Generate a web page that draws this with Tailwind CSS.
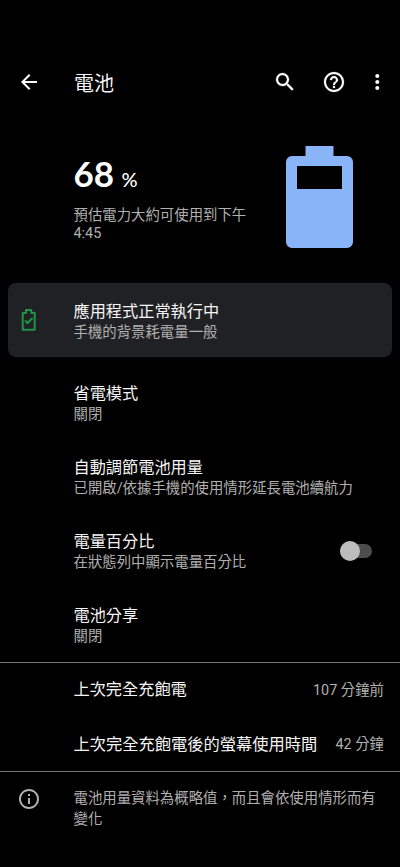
<!DOCTYPE html>
<html lang="zh-Hant">
<head>
<meta charset="utf-8">
<title>電池</title>
<script src="https://cdn.jsdelivr.net/npm/@tailwindcss/browser@4"></script>
</head>
<body class="bg-black text-[#f5f5f5] font-['Roboto','Noto_Sans_CJK_TC',sans-serif]">
<div class="w-[400px] h-[867px] overflow-hidden flex flex-col bg-black">
  <header class="mt-[58px] h-12 flex items-center shrink-0">
    <svg class="ml-[17px] size-6" viewBox="0 0 24 24" fill="#fff"><path d="M20 11H7.83l5.59-5.59L12 4l-8 8 8 8 1.41-1.41L7.83 13H20v-2z"/></svg>
    <h1 class="ml-[33px] pt-[3px] text-[20px] leading-6 grow">電池</h1>
    <svg class="size-6 mr-[25px]" viewBox="0 0 24 24" fill="#fff" stroke="#fff" stroke-width=".3"><path d="M15.5 14h-.79l-.28-.27A6.47 6.47 0 0 0 16 9.5 6.5 6.5 0 1 0 9.5 16c1.61 0 3.09-.59 4.23-1.57l.27.28v.79l5 4.99L20.49 19l-4.99-5zm-6 0C7.01 14 5 11.99 5 9.5S7.01 5 9.5 5 14 7.01 14 9.5 11.99 14 9.5 14z"/></svg>
    <svg class="size-6 mr-[19px]" viewBox="0 0 24 24" fill="#fff" stroke="#fff" stroke-width=".2"><path d="M11 18h2v-2h-2v2zm1-16C6.48 2 2 6.48 2 12s4.48 10 10 10 10-4.48 10-10S17.52 2 12 2zm0 18c-4.41 0-8-3.59-8-8s3.59-8 8-8 8 3.59 8 8-3.59 8-8 8zm0-14c-2.21 0-4 1.79-4 4h2c0-1.1.9-2 2-2s2 .9 2 2c0 2-3 1.750-3 5h2c0-2.250 3-2.500 3-5 0-2.210-1.790-4-4-4z"/></svg>
    <svg class="size-6 mr-[11px]" viewBox="0 0 24 24" fill="#fff"><path d="M12.300 8c1.1 0 2-.9 2-2s-.9-2-2-2-2 .9-2 2 .9 2 2 2zm0 2c-1.1 0-2 .9-2 2s.9 2 2 2 2-.9 2-2-.9-2-2-2zm0 6c-1.1 0-2 .9-2 2s.9 2 2 2 2-.9 2-2-.9-2-2-2z"/></svg>
  </header>
  <section class="h-[177px] shrink-0 flex pl-[73.500px]">
    <div class="w-[212px] pt-[47px]">
      <div class="flex items-baseline font-['Lato'] leading-10 text-white"><span class="w-12 text-[35px] font-bold">68</span><span class="text-[20px] font-medium">%</span></div>
      <p class="mt-[8px] w-[180px] text-[14.4px] leading-[18px] text-[#b0b0b0]">預估電力大約可使用到下午 4:45</p>
    </div>
    <svg class="mt-10 w-[67px] h-[102px]" viewBox="0 0 67 102"><path fill="#8ab4f8" fill-rule="evenodd" d="M19.5 0h28v10H61a6 6 0 0 1 6 6v80a6 6 0 0 1-6 6H6a6 6 0 0 1-6-6V16a6 6 0 0 1 6-6h13.500zM11 20v23h45V20z"/></svg>
  </section>
  <section class="mx-2 h-[74px] shrink-0 rounded-lg bg-[#202124] flex items-center">
    <svg class="ml-2 size-6" viewBox="0 0 24 24" fill="none" stroke="#1e9446" stroke-width="2"><path stroke-linejoin="round" d="M6.700 5H10V2h5.300v3h3.400v16.700h-12z"/><path d="M9 12.500l2.500 2.500 5-5"/></svg>
    <div class="ml-[33.500px] pt-[3px]"><h2 class="text-[16.2px] leading-[21px]">應用程式正常執行中</h2><p class="text-[14.4px] leading-[21px] text-[#b0b0b0]">手機的背景耗電量一般</p></div>
  </section>
  <main class="mt-[9px] shrink-0">
    <div class="h-[74px] pt-[2px] pl-[73.500px] flex flex-col justify-center"><h2 class="text-[16.2px] leading-[21px]">省電模式</h2><p class="text-[14.4px] leading-[21px] text-[#b0b0b0]">關閉</p></div>
    <div class="h-[74px] pt-[2px] pl-[73.500px] flex flex-col justify-center"><h2 class="text-[16.2px] leading-[21px]">自動調節電池用量</h2><p class="text-[14.4px] leading-[21px] text-[#b0b0b0]">已開啟/依據手機的使用情形延長電池續航力</p></div>
    <div class="h-[74px] pl-[73.500px] pr-7 flex items-center justify-between"><div class="pt-[2px]"><h2 class="text-[16.2px] leading-[21px]">電量百分比</h2><p class="text-[14.4px] leading-[21px] text-[#b0b0b0]">在狀態列中顯示電量百分比</p></div>
      <div class="w-8 h-5 flex items-center"><div class="w-8 h-[14px] rounded-full bg-[#4d4d4d] flex items-center"><div class="size-5 shrink-0 rounded-full bg-[#bdbdbd]"></div></div></div></div>
    <div class="h-[74px] pt-[2px] pl-[73.500px] flex flex-col justify-center"><h2 class="text-[16.2px] leading-[21px]">電池分享</h2><p class="text-[14.4px] leading-[21px] text-[#b0b0b0]">關閉</p></div>
  </main>
  <section class="border-y border-[#777] h-[110px] shrink-0 pl-[73.500px] pr-4">
    <div class="h-[54px] pt-px flex justify-between items-center"><h2 class="text-[16.2px]">上次完全充飽電</h2><span class="text-[14.4px] pt-px text-[#b0b0b0]">107 分鐘前</span></div>
    <div class="h-[54px] pt-[2px] flex justify-between items-center"><h2 class="text-[16.25px]">上次完全充飽電後的螢幕使用時間</h2><span class="text-[14.4px] text-[#b0b0b0]">42 分鐘</span></div>
  </section>
  <footer class="flex pt-[15px]">
    <svg class="ml-[16.500px] size-6 shrink-0" viewBox="0 0 24 24" fill="#b0b0b0"><path d="M11 7h2v2h-2zm0 4h2v6h-2zm1-9C6.480 2 2 6.480 2 12s4.480 10 10 10 10-4.480 10-10S17.520 2 12 2zm0 18c-4.410 0-8-3.590-8-8s3.590-8 8-8 8 3.590 8 8-3.590 8-8 8z"/></svg>
    <p class="ml-[33px] pt-px w-[310px] text-[14.4px] leading-[21px] text-[#b0b0b0]">電池用量資料為概略值，而且會依使用情形而有變化</p>
  </footer>
</div>
</body>
</html>
